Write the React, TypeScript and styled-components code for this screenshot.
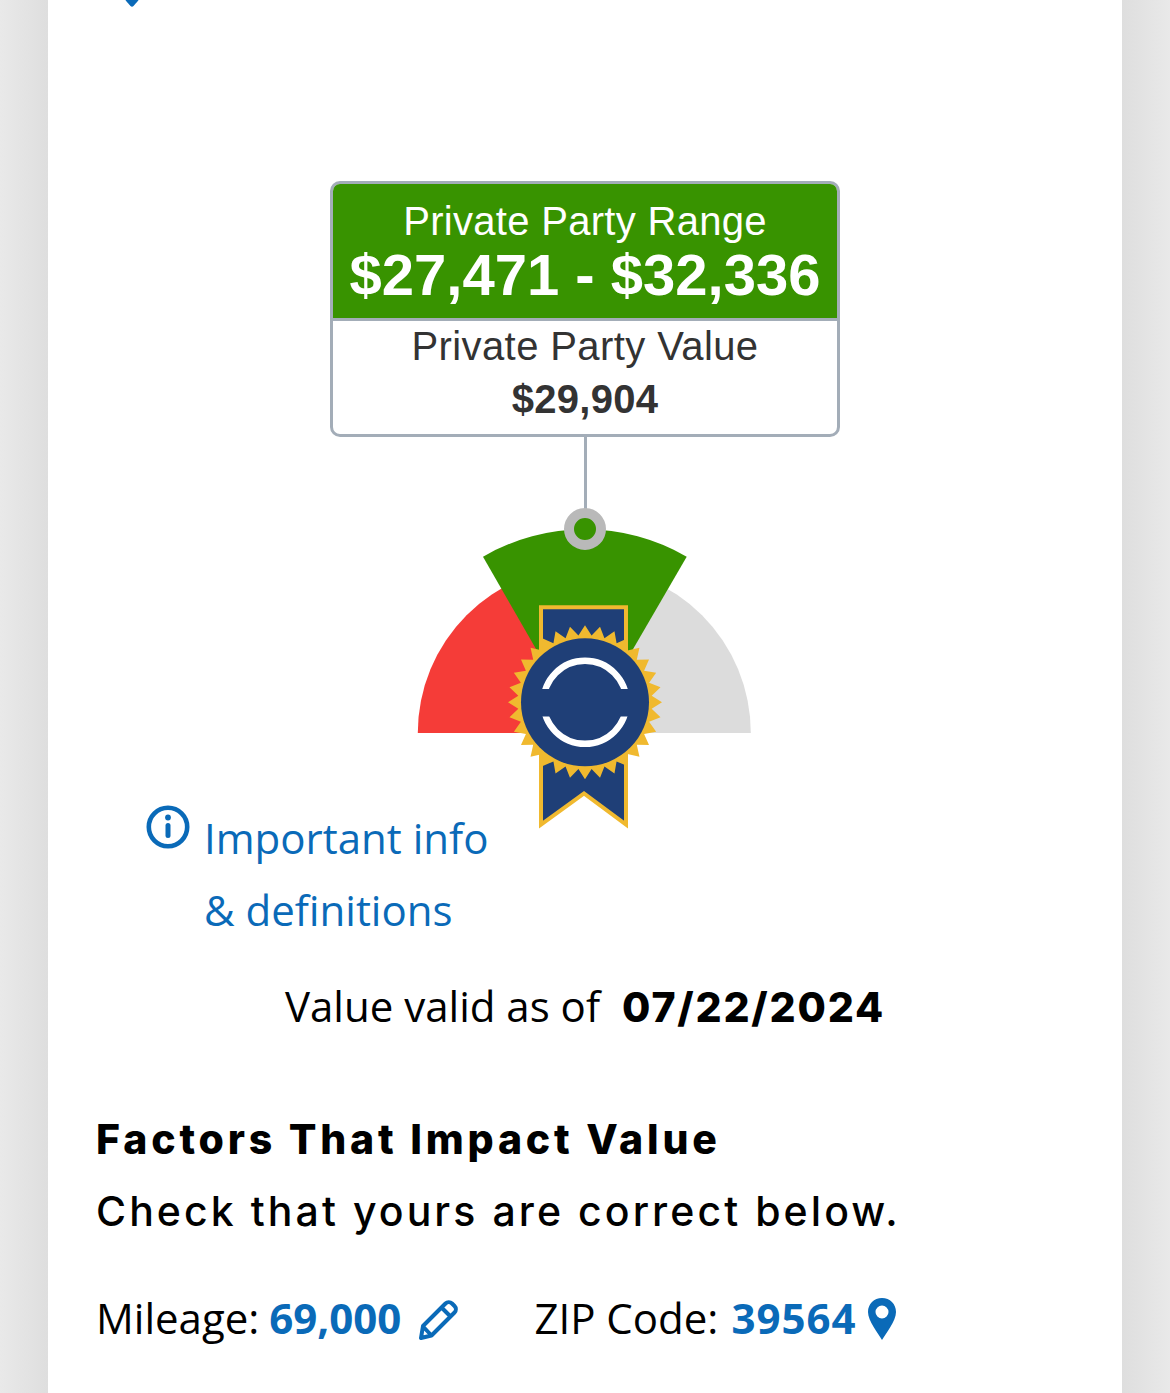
import React from 'react';
import styled, { createGlobalStyle } from 'styled-components';

const GlobalStyle = createGlobalStyle`
  html, body {
    margin: 0;
    padding: 0;
    background: #fff;
  }
`;

const Page = styled.div`
  width: 1170px;
  height: 1393px;
  overflow: hidden;
  display: flex;
  justify-content: center;
  background: linear-gradient(90deg, #e9e9e9 0, #dedede 48px, #dedede 1122px, #e9e9e9 100%);
`;

const Card = styled.main`
  width: 1074px;
  background: #fff;
  display: flex;
  flex-direction: column;
  align-items: center;
`;

const ClippedPin = styled.svg`
  display: block;
  align-self: flex-start;
  margin-left: 74px;
  height: 7px;
  width: 20px;
`;

const ValueBox = styled.section`
  width: 510px;
  height: 256px;
  box-sizing: border-box;
  margin-top: 174px;
  border: 3px solid #a3adb8;
  border-radius: 10px;
  overflow: hidden;
  font-family: 'Liberation Sans', Arial, sans-serif;
  text-align: center;
`;

const RangeBand = styled.div`
  height: 137px;
  background: #389300;
  border-bottom: 3px solid #a3adb8;
  box-sizing: border-box;
  color: #fff;
`;

const RangeLabel = styled.div`
  font-size: 40px;
  line-height: 47px;
  padding-top: 14px;
  letter-spacing: 0.3px;
`;

const RangeValue = styled.div`
  font-size: 58px;
  font-weight: 700;
  line-height: 60px;
`;

const ValueLabel = styled.div`
  font-size: 40px;
  line-height: 44px;
  padding-top: 3px;
  color: #333;
  letter-spacing: 0.4px;
`;

const ValueAmount = styled.div`
  font-size: 40px;
  font-weight: 700;
  line-height: 44px;
  padding-top: 9px;
  color: #333;
  letter-spacing: 0.3px;
`;

const Gauge = styled.svg`
  display: block;
  width: 340px;
  height: 393px;
  margin-bottom: -28px;
`;

const InfoBlock = styled.a`
  align-self: flex-start;
  margin-left: 98px;
  display: flex;
  align-items: flex-start;
  gap: 14px;
  font-family: 'Open Sans', sans-serif;
  font-size: 42px;
  line-height: 72px;
  color: #0a6ab8;
`;

const InfoIcon = styled.svg`
  display: block;
  width: 44px;
  height: 44px;
  margin-top: 3px;
  flex: none;
`;

const ValidLine = styled.p`
  margin: 24px 0 0;
  height: 72px;
  display: flex;
  align-items: baseline;
  gap: 22px;
  font-family: 'Open Sans', sans-serif;
  font-size: 42px;
  line-height: 72px;
  color: #000;
`;

const ValidDate = styled.strong`
  font-family: Inter, sans-serif;
  font-weight: 800;
  font-size: 41px;
  letter-spacing: 1.8px;
`;

const Factors = styled.section`
  align-self: stretch;
  margin-top: 61px;
  padding-left: 48px;
`;

const FactorsTitle = styled.h2`
  margin: 0;
  font-family: Inter, sans-serif;
  font-weight: 800;
  font-size: 41px;
  line-height: 72px;
  letter-spacing: 3.8px;
  color: #000;
`;

const FactorsNote = styled.p`
  margin: 0;
  font-family: Inter, sans-serif;
  font-weight: 500;
  font-size: 41px;
  line-height: 72px;
  letter-spacing: 3.07px;
  color: #000;
`;

const FactList = styled.div`
  display: flex;
  align-items: center;
  margin-top: 43px;
  font-family: 'Open Sans', sans-serif;
  font-size: 42px;
  line-height: 56px;
  color: #000;
`;

const Fact = styled.div<{ $gap: number; $after?: number }>`
  display: flex;
  align-items: center;
  gap: ${(p) => p.$gap}px;
  margin-right: ${(p) => p.$after ?? 0}px;
`;

const FactValue = styled.b<{ $lead?: number; $tracking?: number }>`
  font-weight: 700;
  color: #0a6ab8;
  margin-left: ${(p) => p.$lead ?? 10}px;
  letter-spacing: ${(p) => p.$tracking ?? 0}px;
`;

const FactIcon = styled.svg`
  display: block;
  height: 42px;
  margin-top: 2px;
  flex: none;
`;

const RED = '#f53c38';
const GREEN = '#389300';
const NAVY = '#1f3f77';
const GOLD = '#f0b92f';

// starburst behind the seal, radii from the reference crop
const burstPoints = (cx: number, cy: number, outer: number, inner: number, count: number) => {
  const pts: string[] = [];
  for (let i = 0; i < count * 2; i++) {
    const r = i % 2 === 0 ? outer : inner;
    const a = (Math.PI * i) / count - Math.PI / 2;
    pts.push(`${(cx + r * Math.cos(a)).toFixed(2)},${(cy + r * Math.sin(a)).toFixed(2)}`);
  }
  return pts.join(' ');
};

const ValueGauge = () => (
  <Gauge viewBox="415 437 340 393">
    <defs>
      <clipPath id="seal-arcs">
        <rect x="530" y="650" width="110" height="39" />
        <rect x="530" y="716.5" width="110" height="39" />
      </clipPath>
    </defs>
    <path d="M417.8 733 A166.5 166.5 0 0 1 584.3 566.5 L584.3 733 Z" fill={RED} />
    <path d="M584.3 733 L584.3 566.5 A166.5 166.5 0 0 1 750.8 733 Z" fill="#dcdcdc" />
    <path d="M584.3 733 L483 556.7 A203 203 0 0 1 686.7 556.7 Z" fill={GREEN} />
    <rect x="584" y="437" width="3" height="75" fill="#a3adb8" />
    <circle cx="585" cy="529" r="16" fill={GREEN} stroke="#b9b9b9" strokeWidth="10" />
    <path
      d="M541 607.3 H626 V824.5 L584 793.5 L541 824.5 Z"
      fill={NAVY}
      stroke={GOLD}
      strokeWidth="4"
    />
    <polygon points={burstPoints(585, 702.3, 77, 67, 32)} fill={GOLD} />
    <circle cx="585" cy="702.3" r="64" fill={NAVY} />
    <circle
      cx="585"
      cy="702.3"
      r="41.5"
      fill="none"
      stroke="#fff"
      strokeWidth="6.4"
      clipPath="url(#seal-arcs)"
    />
  </Gauge>
);

const App: React.FC = () => (
  <Page>
    <GlobalStyle />
    <Card>
      <ClippedPin viewBox="0 0 20 7">
        <path d="M0 -6 H20 C19 -2 14 3 11.5 6 Q10 7.5 8.5 6 C6 3 1 -2 0 -6 Z" fill="#0a6ab8" />
      </ClippedPin>
      <ValueBox>
        <RangeBand>
          <RangeLabel>Private Party Range</RangeLabel>
          <RangeValue>$27,471 - $32,336</RangeValue>
        </RangeBand>
        <ValueLabel>Private Party Value</ValueLabel>
        <ValueAmount>$29,904</ValueAmount>
      </ValueBox>
      <ValueGauge />
      <InfoBlock>
        <InfoIcon viewBox="0 0 44 44">
          <circle cx="22" cy="22" r="19.2" fill="none" stroke="#0a6ab8" strokeWidth="4.6" />
          <circle cx="22" cy="12.5" r="2.9" fill="#0a6ab8" />
          <rect x="19.5" y="18" width="5" height="15" rx="2.5" fill="#0a6ab8" />
        </InfoIcon>
        <span>
          Important info
          <br />
          &amp; definitions
        </span>
      </InfoBlock>
      <ValidLine>
        Value valid as of
        <ValidDate>07/22/2024</ValidDate>
      </ValidLine>
      <Factors>
        <FactorsTitle>Factors That Impact Value</FactorsTitle>
        <FactorsNote>Check that yours are correct below.</FactorsNote>
        <FactList>
          <Fact $gap={17} $after={74}>
            <span>
              Mileage:<FactValue>69,000</FactValue>
            </span>
            <FactIcon width="42" viewBox="0 0 42 42" fill="none">
              <path
                d="M27.5 5.5 a4.6 4.6 0 0 1 6.5 0 l2.5 2.5 a4.6 4.6 0 0 1 0 6.5 L13.5 37.5 L3 40 L5 28 Z M23.5 9.5 L32.5 18.5 M5.5 29 L13 37"
                stroke="#0a6ab8"
                strokeWidth="4"
                strokeLinejoin="round"
              />
            </FactIcon>
          </Fact>
          <Fact $gap={12}>
            <span>
              ZIP Code:<FactValue $lead={13} $tracking={1}>39564</FactValue>
            </span>
            <FactIcon width="28" viewBox="0 0 28 42">
              <path
                fillRule="evenodd"
                d="M14 0 C6 0 0 6 0 14 C0 23 10 35 14 42 C18 35 28 23 28 14 C28 6 22 0 14 0 Z M14 7.5 a6.5 6.5 0 1 1 0 13 a6.5 6.5 0 1 1 0 -13 Z"
                fill="#0a6ab8"
              />
            </FactIcon>
          </Fact>
        </FactList>
      </Factors>
    </Card>
  </Page>
);

export default App;
